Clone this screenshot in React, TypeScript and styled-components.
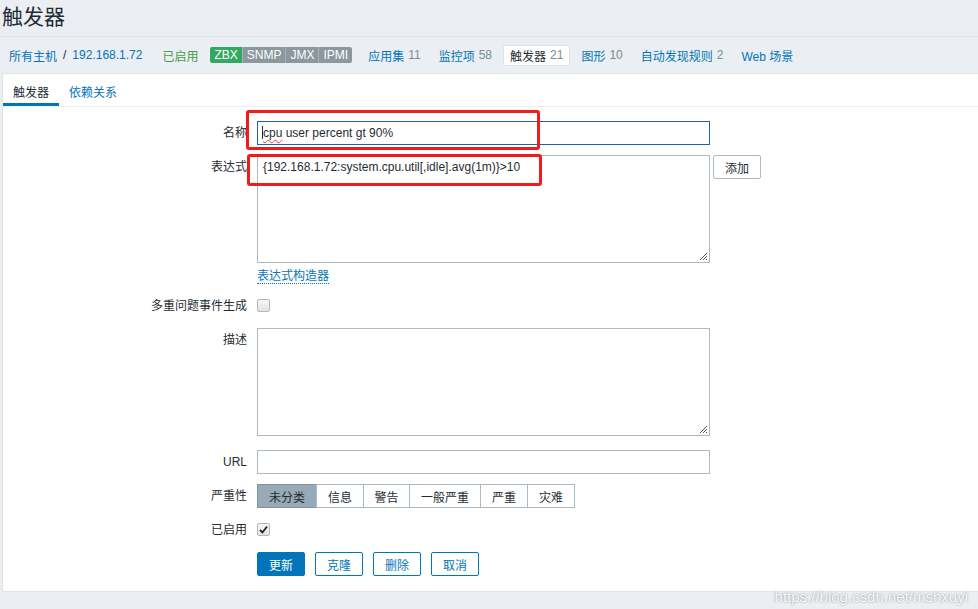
import React from 'react';
import styled, { createGlobalStyle } from 'styled-components';

const GlobalStyle = createGlobalStyle`
  html, body {
    margin: 0;
    padding: 0;
    background: #ebeef2;
  }
  body {
    font-family: Arial, "Liberation Sans", "Microsoft YaHei", "Noto Sans CJK SC", sans-serif;
    font-size: 12px;
    color: #1f2c33;
  }
  * { box-sizing: border-box; }
`;

const Page = styled.div`
  position: relative;
  width: 978px;
  height: 609px;
  overflow: hidden;
`;

const Header = styled.div`
  height: 37px;
  padding: 4px 0 0 2px;
  border-bottom: 1px solid #dfe4e7;
`;

const Title = styled.h1`
  margin: 0;
  font-size: 21px;
  font-weight: normal;
  line-height: 26px;
  color: #1f2c33;
`;

const NavRow = styled.div`
  height: 36px;
  display: flex;
  align-items: center;
  padding-left: 9px;
  white-space: nowrap;
`;

const Link = styled.a`
  color: #0275b8;
  text-decoration: none;
`;

const Sep = styled.span`
  margin: 0 6px;
  color: #1f2c33;
`;

const Enabled = styled.span`
  color: #429e47;
  margin-left: 20px;
`;

const Badges = styled.div`
  display: flex;
  margin-left: 12px;
  margin-right: 9px;
  border-radius: 2px;
  overflow: hidden;
`;

const Badge = styled.span<{ $on?: boolean }>`
  height: 16px;
  line-height: 16px;
  padding: 0 4px;
  color: #fff;
  font-size: 12px;
  background: ${({ $on }) => ($on ? '#31a95f' : '#8c979e')};
  & + & {
    border-left: 1px solid #a9b2b8;
  }
`;

const NavItem = styled.span<{ $active?: boolean }>`
  display: inline-flex;
  align-items: center;
  height: 21px;
  padding: 0 6px;
  margin-right: 4px;
  background: ${({ $active }) => ($active ? '#ffffff' : 'transparent')};
  border: 1px solid ${({ $active }) => ($active ? '#dfe4e7' : 'transparent')};
  border-radius: 2px;
  a {
    color: ${({ $active }) => ($active ? '#1f2c33' : '#0275b8')};
  }
`;

const Count = styled.span`
  color: #768d99;
  margin-left: 4px;
`;

const Panel = styled.div`
  margin-left: 2px;
  background: #fff;
  border: 1px solid #dfe4e7;
  border-right: none;
  height: 519px;
`;

const Tabs = styled.div`
  display: flex;
  height: 33px;
  border-bottom: 1px solid #ebeef2;
`;

const Tab = styled.div<{ $active?: boolean }>`
  padding: 9px 10px 0;
  height: 32px;
  color: ${({ $active }) => ($active ? '#1f2c33' : '#0275b8')};
  border-bottom: 3px solid ${({ $active }) => ($active ? '#0275b8' : 'transparent')};
`;

const Form = styled.div`
  padding-top: 14px;
`;

const Row = styled.div<{ $mb?: number; $minH?: number }>`
  display: grid;
  grid-template-columns: 244px 1fr;
  column-gap: 10px;
  min-height: ${({ $minH }) => ($minH ?? 0)}px;
  margin-bottom: ${({ $mb }) => ($mb ?? 10)}px;
`;

const Label = styled.div`
  text-align: right;
  padding-top: 5px;
  line-height: 14px;
`;

const Field = styled.div`
  display: flex;
  flex-direction: column;
  align-items: flex-start;
`;

const FieldLine = styled.div`
  display: flex;
  align-items: flex-start;
  gap: 3px;
`;

const TextInput = styled.div<{ $focus?: boolean }>`
  width: 453px;
  height: 24px;
  border: 1px solid ${({ $focus }) => ($focus ? '#1f65a6' : '#acbbc2')};
  padding: 0 4px;
  line-height: 22px;
  font-size: 12px;
  color: #1f2c33;
  white-space: nowrap;
`;

const Squiggle = styled.span`
  text-decoration: underline wavy #e33;
  text-decoration-thickness: 1px;
  text-underline-offset: 2px;
`;

const Caret = styled.span`
  display: inline-block;
  width: 1px;
  height: 13px;
  background: #1f2c33;
  vertical-align: -2px;
`;

const TextArea = styled.div`
  position: relative;
  width: 453px;
  height: 108px;
  border: 1px solid #acbbc2;
  padding: 4px 5px;
  line-height: 14px;
  color: #1f2c33;
`;

const Grip = styled.svg`
  position: absolute;
  right: 1px;
  bottom: 1px;
`;

const Button = styled.button<{ $primary?: boolean }>`
  height: 24px;
  width: 48px;
  padding: 0;
  border-radius: 2px;
  font-family: inherit;
  font-size: 12px;
  cursor: pointer;
  border: 1px solid #0275b8;
  background: ${({ $primary }) => ($primary ? '#0275b8' : '#ffffff')};
  color: ${({ $primary }) => ($primary ? '#ffffff' : '#0275b8')};
`;

const GreyButton = styled(Button)`
  border-color: #acbbc2;
  color: #1f2c33;
`;

const DottedLink = styled.a`
  margin-top: 6px;
  color: #0275b8;
  text-decoration: none;
  border-bottom: 1px dotted #0275b8;
  line-height: 14px;
`;

const Check = styled.span`
  display: inline-flex;
  align-items: center;
  justify-content: center;
  width: 13px;
  height: 13px;
  margin-top: 5px;
  border: 1px solid #acbbc2;
  border-radius: 2px;
  background: linear-gradient(#f7f7f7, #e3e3e3);
`;

const Segments = styled.div`
  display: flex;
  height: 24px;
`;

const Segment = styled.span<{ $active?: boolean; $w: number }>`
  width: ${({ $w }) => $w}px;
  display: flex;
  align-items: center;
  justify-content: center;
  border: 1px solid ${({ $active }) => ($active ? '#7f95a2' : '#acbbc2')};
  background: ${({ $active }) => ($active ? '#98aab7' : '#ffffff')};
  & + & {
    margin-left: -1px;
  }
`;

const Buttons = styled.div`
  display: flex;
  gap: 10px;
`;

const Annotation = styled.div<{ $x: number; $y: number; $w: number; $h: number }>`
  position: absolute;
  left: ${({ $x }) => $x}px;
  top: ${({ $y }) => $y}px;
  width: ${({ $w }) => $w}px;
  height: ${({ $h }) => $h}px;
  border: 3px solid #f21b1b;
  border-radius: 3px;
  pointer-events: none;
`;

const Watermark = styled.div`
  position: absolute;
  right: 10px;
  bottom: 4px;
  font-size: 15px;
  color: rgba(255, 255, 255, 0.95);
  text-shadow: 0 0 2px rgba(0, 0, 0, 0.45);
  font-family: Arial, "Liberation Sans", sans-serif;
`;

const ResizeGrip = () => (
  <Grip width="9" height="9" viewBox="0 0 9 9">
    <path d="M8 1 L1 8 M8 4 L4 8 M8 7 L7 8" stroke="#555" strokeWidth="1" />
  </Grip>
);

const CheckMark = () => (
  <svg width="9" height="9" viewBox="0 0 9 9">
    <path d="M1 5 L3.5 7.5 L8 1.5" fill="none" stroke="#222" strokeWidth="1.8" />
  </svg>
);

const severities: [string, number][] = [
  ['未分类', 60],
  ['信息', 48],
  ['警告', 47],
  ['一般严重', 72],
  ['严重', 48],
  ['灾难', 48],
];

const navItems: [string, string, boolean?][] = [
  ['应用集', '11'],
  ['监控项', '58'],
  ['触发器', '21', true],
  ['图形', '10'],
  ['自动发现规则', '2'],
  ['Web 场景', ''],
];

export default function App() {
  return (
    <Page>
      <GlobalStyle />
      <Header>
        <Title>触发器</Title>
      </Header>
      <NavRow>
        <Link href="#">所有主机</Link>
        <Sep>/</Sep>
        <Link href="#">192.168.1.72</Link>
        <Enabled>已启用</Enabled>
        <Badges>
          <Badge $on>ZBX</Badge>
          <Badge>SNMP</Badge>
          <Badge>JMX</Badge>
          <Badge>IPMI</Badge>
        </Badges>
        {navItems.map(([name, count, active]) => (
          <NavItem key={name} $active={active}>
            <Link href="#">{name}</Link>
            {count && <Count>{count}</Count>}
          </NavItem>
        ))}
      </NavRow>
      <Panel>
        <Tabs>
          <Tab $active>触发器</Tab>
          <Tab>依赖关系</Tab>
        </Tabs>
        <Form>
          <Row>
            <Label>名称</Label>
            <Field>
              <TextInput $focus>
                <Caret />
                <Squiggle>cpu</Squiggle> user percent gt 90%
              </TextInput>
            </Field>
          </Row>
          <Row>
            <Label>表达式</Label>
            <Field>
              <FieldLine>
                <TextArea>
                  {'{192.168.1.72:system.cpu.util[,idle].avg(1m)}>10'}
                  <ResizeGrip />
                </TextArea>
                <GreyButton>添加</GreyButton>
              </FieldLine>
              <DottedLink href="#">表达式构造器</DottedLink>
            </Field>
          </Row>
          <Row $minH={24}>
            <Label>多重问题事件生成</Label>
            <Field>
              <Check />
            </Field>
          </Row>
          <Row $mb={14}>
            <Label>描述</Label>
            <Field>
              <TextArea>
                <ResizeGrip />
              </TextArea>
            </Field>
          </Row>
          <Row>
            <Label>URL</Label>
            <Field>
              <TextInput />
            </Field>
          </Row>
          <Row>
            <Label>严重性</Label>
            <Segments>
              {severities.map(([name, w], i) => (
                <Segment key={name} $w={w} $active={i === 0}>
                  {name}
                </Segment>
              ))}
            </Segments>
          </Row>
          <Row $minH={24}>
            <Label>已启用</Label>
            <Field>
              <Check>
                <CheckMark />
              </Check>
            </Field>
          </Row>
          <Row>
            <div />
            <Buttons>
              <Button $primary>更新</Button>
              <Button>克隆</Button>
              <Button>删除</Button>
              <Button>取消</Button>
            </Buttons>
          </Row>
        </Form>
      </Panel>
      <Annotation $x={246} $y={110} $w={294} $h={40} />
      <Annotation $x={247} $y={154} $w={295} $h={32} />
      <Watermark>https://blog.csdn.net/mshxuyi</Watermark>
    </Page>
  );
}
